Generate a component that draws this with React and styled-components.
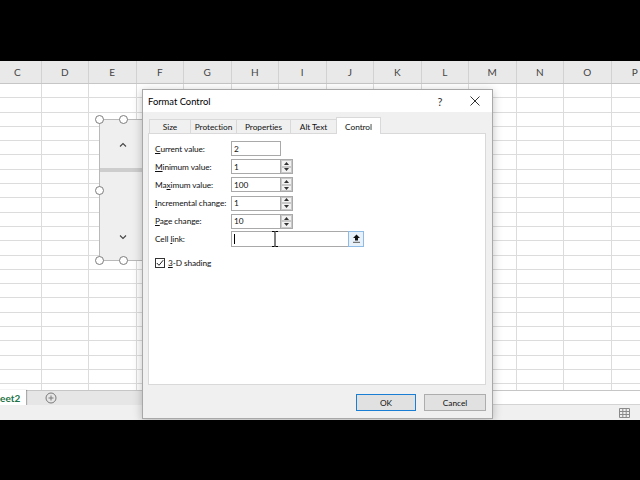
import React from "react";
import styled, { createGlobalStyle } from "styled-components";

const COLUMNS = ["C", "D", "E", "F", "G", "H", "I", "J", "K", "L", "M", "N", "O", "P"];
const ROW_COUNT = 22;
const UI_FONT = `"Segoe UI", Lato, "Noto Sans", sans-serif`;

const GlobalStyle = createGlobalStyle`
  html, body { margin: 0; padding: 0; background: #000; }
  body { width: 640px; height: 480px; overflow: hidden; font-family: ${UI_FONT}; }
  * { box-sizing: border-box; }
`;

const Screen = styled.div`
  width: 640px;
  height: 480px;
  background: #000;
  display: flex;
  flex-direction: column;
`;

const Letterbox = styled.div`
  flex: none;
  height: ${(p) => p.$h}px;
  background: #000;
`;

const Workbook = styled.div`
  position: relative;
  flex: none;
  height: 359px;
  background: #fff;
  display: flex;
  flex-direction: column;
  overflow: hidden;
`;

const HeaderRow = styled.div`
  flex: none;
  height: 23px;
  display: flex;
  margin-left: -6px;
  background: #e9e9e9;
  border-bottom: 1px solid #c6c6c6;
`;

const ColHeader = styled.div`
  flex: none;
  width: 47.5px;
  border-right: 1px solid #d2d2d2;
  display: flex;
  align-items: center;
  justify-content: center;
  font: 10px ${UI_FONT};
  color: #444;
`;

const SheetBody = styled.div`
  flex: none;
  height: 306px;
  overflow: hidden;
`;

const SheetRow = styled.div`
  display: flex;
  height: 14.3px;
  margin-left: -6px;
  border-bottom: 1px solid #dcdcdc;
`;

const Cell = styled.div`
  flex: none;
  width: 47.5px;
  border-right: 1px solid #dcdcdc;
`;

const TabBar = styled.div`
  flex: none;
  height: 15px;
  display: flex;
`;

const SheetTabs = styled.div`
  flex: none;
  width: 320px;
  display: flex;
  align-items: stretch;
  background: #e6e6e6;
  border-top: 1px solid #c6c6c6;
`;

const SheetTab = styled.div`
  flex: none;
  margin-left: -13px;
  margin-top: -1px;
  padding: 0 6px 0 2px;
  background: #fff;
  box-shadow: 1px 0 1px rgba(0, 0, 0, 0.25);
  display: flex;
  align-items: center;
  font: bold 10px ${UI_FONT};
  color: #217346;
`;

const AddSheet = styled.div`
  flex: none;
  margin-left: 19px;
  display: flex;
  align-items: center;
`;

const HScroll = styled.div`
  flex: 1;
  background: #fff;
  border-top: 1px solid #c6c6c6;
  border-bottom: 1px solid #d4d4d4;
`;

const StatusBar = styled.div`
  flex: none;
  height: 15px;
  background: #f0f0f0;
  display: flex;
  align-items: center;
  justify-content: flex-end;
  padding-right: 10px;
`;

/* form scroll bar drawn on the sheet, currently selected */
const SheetScrollBar = styled.div`
  position: absolute;
  left: 99px;
  top: 58px;
  width: 48px;
  height: 142px;
  background: #efefef;
  border: 1px solid #b9b9b9;
  display: flex;
  flex-direction: column;
`;

const ArrowZone = styled.div`
  flex: none;
  height: ${(p) => p.$h}px;
  display: flex;
  align-items: center;
  justify-content: center;
`;

const Thumb = styled.div`
  flex: none;
  height: 4px;
  background: #cdcdcd;
`;

const Track = styled.div`
  flex: 1;
`;

const Handle = styled.div`
  position: absolute;
  left: ${(p) => p.$x}px;
  top: ${(p) => p.$y}px;
  width: 9px;
  height: 9px;
  border-radius: 50%;
  background: #fff;
  border: 1px solid #7d7d7d;
`;

const Dialog = styled.div`
  position: absolute;
  left: 142px;
  top: 28px;
  width: 351px;
  height: 330px;
  border: 1px solid #a8a8a8;
  background: #f0f0f0;
  box-shadow: 0 2px 9px rgba(0, 0, 0, 0.24);
  display: flex;
  flex-direction: column;
`;

const TitleBar = styled.div`
  flex: none;
  height: 22px;
  background: #fff;
  display: flex;
  align-items: center;
  padding-left: 5px;
`;

const Title = styled.div`
  flex: 1;
  font: 9.4px ${UI_FONT};
  color: #000;
`;

const TitleButton = styled.div`
  flex: none;
  width: ${(p) => p.$w}px;
  height: 22px;
  display: flex;
  align-items: center;
  justify-content: center;
  font: 11px ${UI_FONT};
  color: #333;
`;

const DialogBody = styled.div`
  flex: 1;
  display: flex;
  flex-direction: column;
  padding: 5px 6px 7px 5px;
`;

const TabStrip = styled.div`
  flex: none;
  height: 17px;
  display: flex;
  align-items: flex-end;
  padding-left: 2px;
  position: relative;
  z-index: 1;
`;

const Tab = styled.div`
  flex: none;
  width: ${(p) => p.$w}px;
  height: ${(p) => (p.$active ? 17 : 15)}px;
  background: ${(p) => (p.$active ? "#fff" : "#f0f0f0")};
  border: 1px solid #d9d9d9;
  border-bottom: ${(p) => (p.$active ? "none" : "1px solid #d9d9d9")};
  margin-left: -1px;
  padding-top: 1px;
  display: flex;
  align-items: center;
  justify-content: center;
  font: 8.3px ${UI_FONT};
  letter-spacing: -0.05px;
  color: #111;
`;

const Panel = styled.div`
  flex: none;
  height: 252px;
  margin-top: -1px;
  background: #fff;
  border: 1px solid #d9d9d9;
  padding: 7px 6px;
`;

const Form = styled.div`
  display: grid;
  grid-template-columns: 76px max-content;
  grid-auto-rows: 15px;
  row-gap: 3.2px;
  align-items: center;
`;

const Label = styled.div`
  font: 8.3px ${UI_FONT};
  letter-spacing: -0.1px;
  color: #111;
  white-space: nowrap;
`;

const Field = styled.div`
  display: flex;
  height: ${(p) => p.$h || 15}px;
  position: relative;
`;

const TextBox = styled.div`
  width: ${(p) => p.$w}px;
  height: 100%;
  border: 1px solid #a9a9a9;
  background: #fff;
  display: flex;
  align-items: center;
  padding-left: 2px;
  font: 8.3px ${UI_FONT};
  color: #111;
`;

const Spinner = styled.div`
  flex: none;
  width: 12px;
  height: 100%;
  display: flex;
  flex-direction: column;
  border: 1px solid #a9a9a9;
  border-left: none;
`;

const SpinButton = styled.div`
  flex: 1;
  background: #f2f2f2;
  border: 1px solid #c9c9c9;
  display: flex;
  align-items: center;
  justify-content: center;
`;

const Caret = styled.div`
  width: 1px;
  height: 10px;
  background: #000;
`;

const RefButton = styled.div`
  margin-left: auto;
  flex: none;
  width: 16px;
  height: 16px;
  margin-top: -1px;
  margin-right: -1px;
  border: 1px solid #8dbbe6;
  background: #e8f1fa;
  display: flex;
  align-items: center;
  justify-content: center;
`;

const IBeam = styled.svg`
  position: absolute;
  left: 40px;
  top: 0;
`;

const CheckRow = styled.div`
  display: flex;
  align-items: center;
  gap: 3px;
  margin-top: 11px;
`;

const CheckBox = styled.div`
  width: 10px;
  height: 10px;
  border: 1px solid #333;
  background: #fff;
  display: flex;
  align-items: center;
  justify-content: center;
`;

const ButtonRow = styled.div`
  flex: none;
  margin-top: 9px;
  display: flex;
  justify-content: flex-end;
  gap: 8px;
`;

const Button = styled.div`
  width: ${(p) => p.$w}px;
  height: 17px;
  background: #e1e1e1;
  border: 1px solid ${(p) => (p.$default ? "#1a7fd4" : "#adadad")};
  display: flex;
  align-items: center;
  justify-content: center;
  font: 8.3px ${UI_FONT};
  color: #111;
`;

const Chevron = ({ up }) => (
  <svg width="8" height="5" viewBox="0 0 8 5">
    <path
      d={up ? "M1 4.5 L4 1.5 L7 4.5" : "M1 0.5 L4 3.5 L7 0.5"}
      fill="none"
      stroke="#444"
      strokeWidth="1.1"
    />
  </svg>
);

const Triangle = ({ up }) => (
  <svg width="5" height="3" viewBox="0 0 5 3">
    <path d={up ? "M0 3 L2.5 0 L5 3 Z" : "M0 0 L2.5 3 L5 0 Z"} fill="#333" />
  </svg>
);

const SpinField = ({ value }) => (
  <Field>
    <TextBox $w={50}>{value}</TextBox>
    <Spinner>
      <SpinButton>
        <Triangle up />
      </SpinButton>
      <SpinButton>
        <Triangle />
      </SpinButton>
    </Spinner>
  </Field>
);

export default function App() {
  const rows = Array.from({ length: ROW_COUNT }, (_, i) => i);
  return (
    <>
      <GlobalStyle />
      <Screen>
        <Letterbox $h={61} />
        <Workbook>
          <HeaderRow>
            {COLUMNS.map((c) => (
              <ColHeader key={c}>{c}</ColHeader>
            ))}
          </HeaderRow>
          <SheetBody>
            {rows.map((r) => (
              <SheetRow key={r}>
                {COLUMNS.map((c) => (
                  <Cell key={c} />
                ))}
              </SheetRow>
            ))}
          </SheetBody>
          <TabBar>
            <SheetTabs>
              <SheetTab>Sheet2</SheetTab>
              <AddSheet>
                <svg width="12" height="12" viewBox="0 0 12 12">
                  <circle cx="6" cy="6" r="5" fill="none" stroke="#7a7a7a" strokeWidth="1" />
                  <path d="M6 3.5 V8.5 M3.5 6 H8.5" stroke="#7a7a7a" strokeWidth="1" />
                </svg>
              </AddSheet>
            </SheetTabs>
            <HScroll />
          </TabBar>
          <StatusBar>
            <svg width="11" height="10" viewBox="0 0 11 10">
              <path
                d="M0.5 0.5 H10.5 V9.5 H0.5 Z M0.5 3.5 H10.5 M0.5 6.5 H10.5 M3.8 0.5 V9.5 M7.2 0.5 V9.5"
                fill="none"
                stroke="#8a8a8a"
                strokeWidth="1"
              />
            </svg>
          </StatusBar>

          <SheetScrollBar>
            <ArrowZone $h={48}>
              <Chevron up />
            </ArrowZone>
            <Thumb />
            <Track />
            <ArrowZone $h={46}>
              <Chevron />
            </ArrowZone>
            <Handle $x={-5} $y={-5} />
            <Handle $x={19} $y={-5} />
            <Handle $x={-5} $y={66} />
            <Handle $x={-5} $y={136} />
            <Handle $x={19} $y={136} />
          </SheetScrollBar>

          <Dialog>
            <TitleBar>
              <Title>Format Control</Title>
              <TitleButton $w={20}>?</TitleButton>
              <TitleButton $w={8} />
              <TitleButton $w={34}>
                <svg width="10" height="10" viewBox="0 0 10 10">
                  <path d="M0.5 0.5 L9.5 9.5 M9.5 0.5 L0.5 9.5" stroke="#333" strokeWidth="1" />
                </svg>
              </TitleButton>
            </TitleBar>
            <DialogBody>
              <TabStrip>
                <Tab $w={42}>Size</Tab>
                <Tab $w={47}>Protection</Tab>
                <Tab $w={55}>Properties</Tab>
                <Tab $w={47}>Alt Text</Tab>
                <Tab $w={45} $active>
                  Control
                </Tab>
              </TabStrip>
              <Panel>
                <Form>
                  <Label>
                    <u>C</u>urrent value:
                  </Label>
                  <Field>
                    <TextBox $w={50}>2</TextBox>
                  </Field>
                  <Label>
                    <u>M</u>inimum value:
                  </Label>
                  <SpinField value="1" />
                  <Label>
                    Ma<u>x</u>imum value:
                  </Label>
                  <SpinField value="100" />
                  <Label>
                    <u>I</u>ncremental change:
                  </Label>
                  <SpinField value="1" />
                  <Label>
                    <u>P</u>age change:
                  </Label>
                  <SpinField value="10" />
                  <Label>
                    Cell <u>l</u>ink:
                  </Label>
                  <Field $h={16}>
                    <TextBox $w={133}>
                      <Caret />
                      <RefButton>
                        <svg width="9" height="9" viewBox="0 0 9 9">
                          <path d="M4.5 0.5 L8 4 H6 V6.5 H3 V4 H1 Z" fill="#111" />
                          <path d="M1 8.3 H8" stroke="#555" strokeWidth="1" />
                        </svg>
                      </RefButton>
                    </TextBox>
                    <IBeam width="8" height="16" viewBox="0 0 8 16">
                      <path d="M1 0.5 H3.3 L4 1.2 L4.7 0.5 H7 M4 1.2 V14.8 M1 15.5 H3.3 L4 14.8 L4.7 15.5 H7" fill="none" stroke="#000" strokeWidth="1" />
                    </IBeam>
                  </Field>
                </Form>
                <CheckRow>
                  <CheckBox>
                    <svg width="8" height="8" viewBox="0 0 8 8">
                      <path d="M0.8 4 L3 6.3 L7.2 1.2" fill="none" stroke="#222" strokeWidth="1" />
                    </svg>
                  </CheckBox>
                  <Label>
                    <u>3</u>-D shading
                  </Label>
                </CheckRow>
              </Panel>
              <ButtonRow>
                <Button $w={60} $default>
                  OK
                </Button>
                <Button $w={62}>Cancel</Button>
              </ButtonRow>
            </DialogBody>
          </Dialog>
        </Workbook>
        <Letterbox $h={60} />
      </Screen>
    </>
  );
}
